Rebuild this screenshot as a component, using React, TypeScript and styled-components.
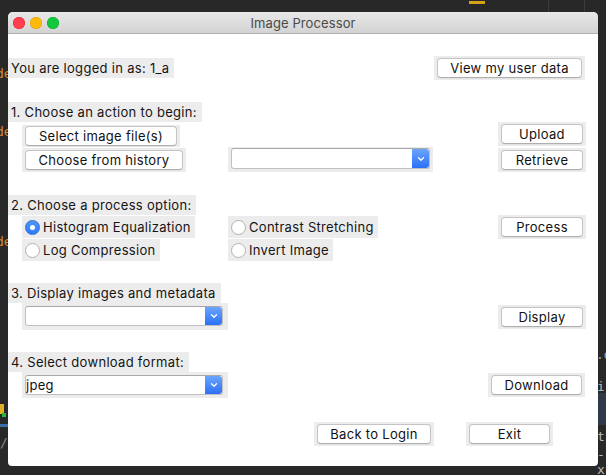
import React from "react";
import styled, { createGlobalStyle } from "styled-components";

const Global = createGlobalStyle`
  html, body { margin: 0; padding: 0; background: #282828; }
  body { width: 606px; height: 475px; overflow: hidden; font-family: Inter, "Liberation Sans", sans-serif; }
  * { box-sizing: border-box; }
`;

const Desktop = styled.div`
  position: relative;
  width: 606px;
  height: 475px;
  background: #282828;
  padding: 12px 8px 0;
  overflow: hidden;
`;

const BgText = styled.span<{ $x: number; $y: number; $c: string }>`
  position: absolute;
  left: ${(p) => p.$x}px;
  top: ${(p) => p.$y}px;
  color: ${(p) => p.$c};
  font: 13px "DejaVu Sans Mono", monospace;
  z-index: 0;
`;

const BgBar = styled.div<{ $x: number; $y: number; $w: number; $h: number; $c: string }>`
  position: absolute;
  left: ${(p) => p.$x}px;
  top: ${(p) => p.$y}px;
  width: ${(p) => p.$w}px;
  height: ${(p) => p.$h}px;
  background: ${(p) => p.$c};
  z-index: 0;
`;

const Window = styled.div`
  position: relative;
  z-index: 1;
  width: 590px;
  height: 454px;
  background: #ffffff;
  border-radius: 5px 5px 4px 4px;
  overflow: hidden;
  display: flex;
  flex-direction: column;
`;

const TitleBar = styled.div`
  flex: none;
  height: 22px;
  background: linear-gradient(#e8e8e8, #d3d3d3);
  border-bottom: 1px solid #b0b0b0;
  display: grid;
  grid-template-columns: 1fr auto 1fr;
  align-items: center;
`;

const Lights = styled.div`
  display: flex;
  gap: 5px;
  padding-left: 5px;
`;

const Light = styled.span<{ $c: string; $b: string }>`
  width: 12px;
  height: 12px;
  border-radius: 50%;
  background: ${(p) => p.$c};
  box-shadow: inset 0 0 0 0.5px ${(p) => p.$b};
`;

const Title = styled.div`
  font-size: 13px;
  color: #4a4a4a;
  letter-spacing: 0.1px;
`;

const Body = styled.div`
  display: flex;
  flex-direction: column;
  letter-spacing: 0.3px;
`;

const Row = styled.div<{ $h: number; $mt?: number }>`
  display: grid;
  grid-template-columns: 14px 206px 270px 87px 13px;
  height: ${(p) => p.$h}px;
  margin-top: ${(p) => p.$mt ?? 0}px;
  align-items: center;
`;

const SectionLabel = styled.div`
  grid-column: 1 / 3;
  justify-self: start;
  height: 20px;
  line-height: 20px;
  padding: 0 5px 0 3px;
  background: #ececec;
  font-size: 13px;
  color: #151515;
  white-space: nowrap;
`;

const Slot = styled.div<{ $col: string; $justify?: string; $align?: string }>`
  grid-column: ${(p) => p.$col};
  justify-self: ${(p) => p.$justify ?? "start"};
  align-self: ${(p) => p.$align ?? "center"};
  display: flex;
  background: #ececec;
`;

const ButtonFrame = styled(Slot)<{ $pad?: string }>`
  padding: ${(p) => p.$pad ?? "2px 3px"};
`;

const MacButton = styled.button<{ $w: number }>`
  width: ${(p) => p.$w}px;
  height: 20px;
  padding: 0;
  border: 1px solid #c4c4c4;
  border-bottom-color: #aeaeae;
  border-radius: 4px;
  background: #ffffff;
  box-shadow: 0 0.5px 0.5px rgba(0, 0, 0, 0.08);
  font-family: inherit;
  font-size: 13px;
  letter-spacing: 0.3px;
  color: #111;
  display: flex;
  align-items: center;
  justify-content: center;
  white-space: nowrap;
`;

const RadioFrame = styled(Slot)`
  height: 22px;
  align-items: center;
  gap: 3px;
  padding: 0 4px 0 3px;
  font-size: 13px;
  color: #151515;
  white-space: nowrap;
`;

const RadioDot = styled.span<{ $on?: boolean }>`
  width: 15px;
  height: 15px;
  border-radius: 50%;
  flex: none;
  display: flex;
  align-items: center;
  justify-content: center;
  background: ${(p) => (p.$on ? "linear-gradient(#4f95fb, #2f7bf5)" : "#ffffff")};
  border: 1px solid ${(p) => (p.$on ? "#2a6fe0" : "#b2b2b2")};
  &::after {
    content: "";
    width: 5px;
    height: 5px;
    border-radius: 50%;
    background: #fff;
    display: ${(p) => (p.$on ? "block" : "none")};
  }
`;

const ComboFrame = styled(Slot)<{ $pad: string }>`
  padding: ${(p) => p.$pad};
`;

const ComboField = styled.div<{ $w: number; $h: number }>`
  width: ${(p) => p.$w}px;
  height: ${(p) => p.$h}px;
  display: flex;
  background: #fff;
  border: 1px solid #c0c0c0;
  border-top-color: #a9a9a9;
  border-radius: 3px;
  overflow: hidden;
`;

const ComboText = styled.div`
  flex: 1;
  font-size: 13px;
  color: #111;
  line-height: 18px;
`;

const Stepper = styled.div`
  width: 17px;
  flex: none;
  background: linear-gradient(#6aa6fd, #2d6ff5);
  display: flex;
  align-items: center;
  justify-content: center;
  border-radius: 0 3px 3px 0;
`;

const BottomBar = styled.div`
  display: flex;
  gap: 32px;
  padding-left: 306px;
  margin-top: 24px;
  height: 24px;
  align-items: center;
`;

const BottomFrame = styled.div`
  display: flex;
  background: #ececec;
  padding: 2px 3px;
`;

const Chevron = () => (
  <svg width="8" height="6" viewBox="0 0 8 6">
    <path d="M1.5 1.8 L4 4.2 L6.5 1.8" fill="none" stroke="#fff" strokeWidth="1.3" strokeLinecap="round" strokeLinejoin="round" />
  </svg>
);

const Combo = ({ col, pad, w, h, value }: { col: string; pad: string; w: number; h: number; value?: string }) => (
  <ComboFrame $col={col} $pad={pad}>
    <ComboField $w={w} $h={h}>
      <ComboText>{value}</ComboText>
      <Stepper>
        <Chevron />
      </Stepper>
    </ComboField>
  </ComboFrame>
);

export default function App() {
  return (
    <>
      <Global />
      <Desktop>
        <BgText $x={-4} $y={66} $c="#d58a2e">de</BgText>
        <BgText $x={-4} $y={124} $c="#d58a2e">de</BgText>
        <BgText $x={-4} $y={234} $c="#d58a2e">de</BgText>
        <BgBar $x={0} $y={404} $w={4} $h={10} $c="#e0b020" />
        <BgBar $x={2} $y={413} $w={4} $h={4} $c="#22bb33" />
        <BgBar $x={0} $y={424} $w={8} $h={3} $c="#3b6ea8" />
        <BgText $x={0} $y={435} $c="#888">/</BgText>
        <BgBar $x={469} $y={1} $w={16} $h={3} $c="#d7a21a" />
        <BgText $x={487} $y={-10} $c="#777">···</BgText>
        <BgBar $x={548} $y={0} $w={1} $h={12} $c="#3c3c3c" />
        <BgBar $x={584} $y={0} $w={1} $h={12} $c="#3c3c3c" />
        <BgBar $x={598} $y={393} $w={8} $h={32} $c="#2f3a48" />
        <BgText $x={596} $y={347} $c="#9fb0a0">.d</BgText>
        <BgText $x={597} $y={379} $c="#bbb">ir</BgText>
        <BgText $x={597} $y={429} $c="#bbb">ti</BgText>
        <BgText $x={597} $y={447} $c="#bbb">-x</BgText>
        <Window>
          <TitleBar>
            <Lights>
              <Light $c="#ff3d4f" $b="#e0283a" />
              <Light $c="#ffb90a" $b="#e09e00" />
              <Light $c="#12c83c" $b="#0aa82c" />
            </Lights>
            <Title>Image Processor</Title>
            <span />
          </TitleBar>
          <Body>
            <Row $h={24} $mt={22}>
              <SectionLabel>You are logged in as: 1_a</SectionLabel>
              <ButtonFrame $col="3 / 5" $justify="end">
                <MacButton $w={145}>View my user data</MacButton>
              </ButtonFrame>
            </Row>

            <Row $h={20} $mt={22}>
              <SectionLabel>1. Choose an action to begin:</SectionLabel>
            </Row>
            <Row $h={25}>
              <ButtonFrame $col="2" $align="end" $pad="1px 3px">
                <MacButton $w={152}>Select image file(s)</MacButton>
              </ButtonFrame>
              <ButtonFrame $col="4" $align="start">
                <MacButton $w={82}>Upload</MacButton>
              </ButtonFrame>
            </Row>
            <Row $h={24}>
              <ButtonFrame $col="2">
                <MacButton $w={158}>Choose from history</MacButton>
              </ButtonFrame>
              <Combo col="3" pad="1px 3px 3px 3px" w={199} h={21} />
              <ButtonFrame $col="4">
                <MacButton $w={82}>Retrieve</MacButton>
              </ButtonFrame>
            </Row>

            <Row $h={20} $mt={24}>
              <SectionLabel>2. Choose a process option:</SectionLabel>
            </Row>
            <Row $h={24}>
              <RadioFrame $col="2">
                <RadioDot $on />
                Histogram Equalization
              </RadioFrame>
              <RadioFrame $col="3">
                <RadioDot />
                Contrast Stretching
              </RadioFrame>
              <ButtonFrame $col="4">
                <MacButton $w={82}>Process</MacButton>
              </ButtonFrame>
            </Row>
            <Row $h={22}>
              <RadioFrame $col="2">
                <RadioDot />
                Log Compression
              </RadioFrame>
              <RadioFrame $col="3">
                <RadioDot />
                Invert Image
              </RadioFrame>
            </Row>

            <Row $h={20} $mt={22}>
              <SectionLabel>3. Display images and metadata</SectionLabel>
            </Row>
            <Row $h={27}>
              <Combo col="2" pad="3px 5px 4px 3px" w={198} h={20} />
              <ButtonFrame $col="4">
                <MacButton $w={82}>Display</MacButton>
              </ButtonFrame>
            </Row>

            <Row $h={20} $mt={22}>
              <SectionLabel>4. Select download format:</SectionLabel>
            </Row>
            <Row $h={26}>
              <Combo col="2" pad="3px 5px 3px 3px" w={198} h={20} value="jpeg" />
              <ButtonFrame $col="3 / 5" $justify="end">
                <MacButton $w={91}>Download</MacButton>
              </ButtonFrame>
            </Row>

            <BottomBar>
              <BottomFrame>
                <MacButton $w={114}>Back to Login</MacButton>
              </BottomFrame>
              <BottomFrame>
                <MacButton $w={81}>Exit</MacButton>
              </BottomFrame>
            </BottomBar>
          </Body>
        </Window>
      </Desktop>
    </>
  );
}
